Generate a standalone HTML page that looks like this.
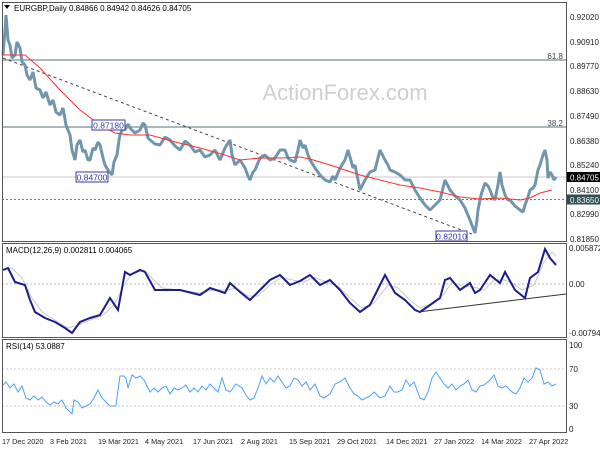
<!DOCTYPE html>
<html><head><meta charset="utf-8"><style>
html,body{margin:0;padding:0;background:#fff;}
svg{display:block;font-family:"Liberation Sans",sans-serif;}
</style></head><body>
<svg width="600" height="450" viewBox="0 0 600 450">
<rect width="600" height="450" fill="#fff"/>
<text x="345" y="100" font-size="22" fill="#cfcfcf" text-anchor="middle">ActionForex.com</text>
<line x1="2" y1="60" x2="566" y2="60" stroke="#5a7078" stroke-width="1"/>
<line x1="2" y1="127" x2="566" y2="127" stroke="#5a7078" stroke-width="1"/>
<text x="563" y="59" font-size="8" fill="#444" text-anchor="end">61.8</text>
<text x="563" y="126" font-size="8" fill="#444" text-anchor="end">38.2</text>
<line x1="2" y1="177" x2="566" y2="177" stroke="#c8c8c8" stroke-width="1"/>
<line x1="2" y1="199.5" x2="566" y2="199.5" stroke="#777" stroke-width="1" stroke-dasharray="2,2"/>
<line x1="3" y1="58" x2="472" y2="234" stroke="#444" stroke-width="1" stroke-dasharray="3,3"/>
<polyline fill="none" stroke="#6f96ad" stroke-width="3" stroke-linejoin="bevel" points="3,55 5,30 6,15 8,40 10,45 12,58 15,55 17,42 20,48 22,62 25,65 27,75 30,80 33,72 36,88 40,90 43,98 46,92 50,105 53,100 56,112 60,115 63,108 66,125 70,135 72,150 75,160 77,145 80,140 83,152 85,150 88,160 90,160 93,148 95,150 98,142 100,145 103,158 105,165 108,170 112,175 114,162 117,155 119,140 120,135 123,128 125,130 128,124 130,128 135,133 140,130 143,123 145,125 148,138 150,140 155,144 160,145 165,137 170,140 175,146 180,150 185,141 190,145 195,152 200,150 205,157 210,155 215,150 220,160 225,148 230,140 232,155 235,165 240,160 245,168 248,176 250,180 253,172 255,170 260,158 265,155 270,160 275,158 280,150 285,150 288,158 290,160 295,162 298,150 300,140 303,148 305,145 308,155 310,160 315,168 320,175 325,180 330,182 333,176 335,180 340,168 345,160 348,150 350,157 353,168 355,165 358,180 360,190 363,184 365,180 370,172 375,170 378,158 380,150 383,156 385,160 388,165 390,170 395,172 400,175 405,180 410,180 415,190 420,198 425,205 430,210 435,205 440,200 443,188 445,180 448,186 450,190 455,196 460,200 465,208 470,220 473,228 475,233 477,220 478,210 481,195 485,183 488,186 490,190 493,198 495,200 498,185 500,172 502,185 505,195 508,200 510,200 515,206 520,210 523,212 525,205 528,197 530,190 533,188 535,185 538,170 540,165 543,155 545,150 547,160 548,178 550,172 552,175 554,180 556,177"/>
<polyline fill="none" stroke="#ff3030" stroke-width="1" points="3,55 25,55 40,68 60,90 80,110 100,125 115,133 130,135 150,135 175,142 200,148 225,155 240,160 260,158 280,158 300,157 310,159 330,165 345,170 360,175 380,180 400,185 420,188 440,192 460,197 480,199 500,198 520,200 530,198 540,193 552,190"/>
<rect x="92" y="120" width="33" height="10" fill="#fff" stroke="#3a3aa0"/>
<text x="108.5" y="128.5" font-size="8.5" fill="#3a3aa0" text-anchor="middle">0.87180</text>
<rect x="76" y="172" width="32" height="10" fill="#fff" stroke="#3a3aa0"/>
<text x="92" y="180.5" font-size="8.5" fill="#3a3aa0" text-anchor="middle">0.84700</text>
<rect x="436" y="231" width="31" height="10" fill="#fff" stroke="#3a3aa0"/>
<text x="451.5" y="239.5" font-size="8.5" fill="#3a3aa0" text-anchor="middle">0.82010</text>
<polygon points="4,5 10,5 7,9" fill="#000"/>
<text x="14" y="11" font-size="8" fill="#000">EURGBP,Daily  0.84866 0.84942 0.84626 0.84705</text>

<line x1="2" y1="284" x2="566" y2="284" stroke="#bbb" stroke-dasharray="2,2"/>
<polyline fill="none" stroke="#c8c8c8" stroke-width="1" points="3,270 12,268 22,278 32,298 42,312 55,320 68,328 78,325 90,320 102,316 114,305 124,285 132,274 144,270 152,278 162,288 180,290 200,293 212,290 228,290 236,288 248,296 258,296 270,285 282,277 292,280 304,282 314,277 326,282 338,286 350,298 362,308 374,303 388,285 398,288 410,300 420,308 432,304 444,294 452,282 462,286 474,287 484,290 494,280 504,280 512,283 522,290 534,285 544,262 552,252 556,256"/>
<polyline fill="none" stroke="#1c1c8c" stroke-width="2" points="3,270 8,268 15,282 25,285 30,300 35,312 45,318 55,322 65,328 72,333 80,322 90,318 100,315 110,298 118,310 125,272 130,275 140,270 145,272 155,290 165,290 180,290 200,295 210,288 225,293 230,283 240,292 250,300 260,290 270,280 280,275 290,285 300,281 310,275 320,285 330,280 340,290 350,303 360,312 370,305 385,275 395,293 405,300 415,310 420,312 430,305 440,298 445,280 450,278 460,290 470,283 475,293 480,290 490,275 500,283 505,272 515,290 525,298 530,278 538,272 545,249 550,258 556,265"/>
<line x1="418" y1="312" x2="566" y2="294" stroke="#333" stroke-width="1"/>
<text x="6" y="253" font-size="8" fill="#000">MACD(12,26,9) 0.002811 0.004065</text>

<line x1="2" y1="369" x2="566" y2="369" stroke="#c8c8c8" stroke-dasharray="2,2"/>
<line x1="2" y1="406" x2="566" y2="406" stroke="#c8c8c8" stroke-dasharray="2,2"/>
<polyline fill="none" stroke="#4aa0ff" stroke-width="1" points="3,385 6,382 10,388 14,384 18,392 22,386 26,398 30,400 34,396 38,400 42,397 46,402 50,405 54,402 58,404 62,400 66,408 70,412 72,414 74,400 78,402 82,408 86,406 90,404 94,398 98,390 102,398 106,402 110,406 116,406 118,390 120,376 124,376 126,378 128,388 132,375 136,378 140,376 144,380 146,384 150,392 154,388 158,392 162,388 166,386 170,394 174,388 178,390 182,388 186,385 190,392 194,388 198,392 202,386 206,390 210,384 214,388 218,392 222,378 226,390 230,392 236,384 242,388 246,395 250,400 254,398 258,388 262,376 266,384 270,378 274,382 278,376 282,382 286,388 290,386 294,378 298,380 302,386 306,382 310,390 315,384 320,396 324,398 330,394 335,384 340,382 345,378 350,388 354,394 358,396 362,400 366,398 370,396 374,392 380,398 385,396 390,386 394,392 398,392 402,390 406,380 410,386 414,382 420,398 424,400 428,392 432,378 436,372 440,378 444,384 448,388 452,384 456,390 460,386 464,384 468,380 472,390 476,392 480,386 484,385 490,380 494,375 498,386 502,388 506,386 512,392 516,394 520,388 524,378 528,382 532,378 536,368 540,370 544,384 548,382 552,386 556,384"/>
<text x="6" y="349" font-size="8" fill="#000">RSI(14) 53.0887</text>

<rect x="2.5" y="2.5" width="564" height="239" fill="none" stroke="#555"/>
<rect x="2.5" y="243.5" width="564" height="94" fill="none" stroke="#555"/>
<rect x="2.5" y="339.5" width="564" height="93" fill="none" stroke="#555"/>

<g font-size="8" fill="#222">
<text x="570" y="20">0.92020</text>
<text x="570" y="45">0.90910</text>
<text x="570" y="69">0.89770</text>
<text x="570" y="94">0.88630</text>
<text x="570" y="119">0.87490</text>
<text x="570" y="144">0.86380</text>
<text x="570" y="168">0.85240</text>
<text x="570" y="193">0.84100</text>
<text x="570" y="217">0.82990</text>
<text x="570" y="242">0.81850</text>
<text x="569" y="251">0.005872</text>
<text x="569" y="287">0.00</text>
<text x="569" y="336">-0.007945</text>
<text x="569" y="348">100</text>
<text x="569" y="372">70</text>
<text x="569" y="409">30</text>
<text x="569" y="432">0</text>
</g>
<rect x="567" y="172" width="33" height="10" fill="#000"/>
<text x="570" y="180.5" font-size="8" fill="#fff">0.84705</text>
<rect x="567" y="194.5" width="33" height="10" fill="#2f4f4f"/>
<text x="570" y="203" font-size="8" fill="#fff">0.83650</text>

<g font-size="7.3" fill="#222">
<text x="2" y="444">17 Dec 2020</text>
<text x="50" y="444">3 Feb 2021</text>
<text x="98" y="444">19 Mar 2021</text>
<text x="145" y="444">4 May 2021</text>
<text x="193" y="444">17 Jun 2021</text>
<text x="241" y="444">2 Aug 2021</text>
<text x="289" y="444">15 Sep 2021</text>
<text x="337" y="444">29 Oct 2021</text>
<text x="386" y="444">14 Dec 2021</text>
<text x="434" y="444">27 Jan 2022</text>
<text x="481" y="444">14 Mar 2022</text>
<text x="529" y="444">27 Apr 2022</text>
</g>
</svg>
</body></html>
